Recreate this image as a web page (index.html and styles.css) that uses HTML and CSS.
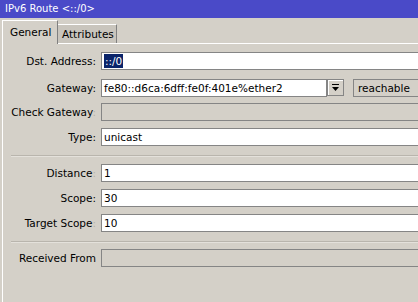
FILE: index.html
```html
<!DOCTYPE html>
<html>
<head>
<meta charset="utf-8">
<link rel="stylesheet" href="styles.css">
</head>
<body>
<div class="window">
  <div class="titlebar">IPv6 Route &lt;::/0&gt;</div>
  <div class="tabs">
    <div class="tab active">General</div>
    <div class="tab">Attributes</div>
  </div>
  <div class="panel">
    <div class="row">
      <div class="label">Dst. Address:</div>
      <div class="field"><span class="sel">::/0</span></div>
    </div>
    <div class="row row-gw">
      <div class="label">Gateway:</div>
      <div class="gw">
        <div class="field gw-input">fe80::d6ca:6dff:fe0f:401e%ether2</div>
        <div class="dd-btn"><svg width="7" height="8" viewBox="0 0 7 8"><rect x="0" y="0" width="7" height="1" fill="#000"/><path d="M0 3 H7 L3.5 7 Z" fill="#000"/></svg></div>
        <div class="field disabled status">reachable</div>
      </div>
    </div>
    <div class="row row-check">
      <div class="label">Check Gateway<span class="faint">:</span></div>
      <div class="field disabled"></div>
    </div>
    <div class="row">
      <div class="label">Type:</div>
      <div class="field">unicast</div>
    </div>
    <div class="sep sep1"></div>
    <div class="row row-first">
      <div class="label">Distance<span class="faint">:</span></div>
      <div class="field">1</div>
    </div>
    <div class="row">
      <div class="label">Scope:</div>
      <div class="field">30</div>
    </div>
    <div class="row">
      <div class="label">Target Scope<span class="faint">:</span></div>
      <div class="field">10</div>
    </div>
    <div class="sep sep2"></div>
    <div class="row row-first">
      <div class="label">Received From</div>
      <div class="field disabled"></div>
    </div>
  </div>
</div>
</body>
</html>
```
FILE: styles.css
```css
html, body {
  margin: 0;
  padding: 0;
  background: #d4d0c8;
  overflow: hidden;
}
body {
  width: 418px;
  height: 302px;
  font-family: "DejaVu Sans", sans-serif;
  font-size: 10px;
  color: #000;
}
.window {
  width: 418px;
  height: 302px;
  overflow: hidden;
}
.titlebar {
  height: 18px;
  line-height: 18px;
  background: #4a4ac8;
  color: #fff;
  padding-left: 5px;
  font-size: 10px;
}
.tabs {
  display: flex;
  align-items: flex-end;
  height: 23px;
  margin-top: 2px;
  padding-left: 2px;
  position: relative;
  z-index: 1;
}
.tab {
  box-sizing: border-box;
  height: 19px;
  width: 59px;
  background: #c9c5bd;
  border-top: 1px solid #fff;
  border-right: 1px solid #808080;
  padding-left: 4px;
  line-height: 18px;
  font-size: 10.5px;
}
.tab.active {
  height: 24px;
  width: 56px;
  margin-bottom: -1px;
  background: #d4d0c8;
  border-left: 1px solid #fff;
  padding-left: 7px;
  line-height: 22px;
}
.panel {
  border-top: 1px solid #fff;
  border-left: 1px solid #fff;
  margin-left: 2px;
  padding-top: 8px;
  height: 260px;
}
.row {
  display: grid;
  grid-template-columns: 93px 1fr;
  column-gap: 5px;
  height: 18px;
  margin-top: 7px;
}
.row:first-child {
  margin-top: 0;
}
.row-gw {
  margin-top: 9px;
}
.row-check {
  margin-top: 6px;
}
.row-first {
  margin-top: 0;
}
.label {
  text-align: right;
  line-height: 18px;
  white-space: nowrap;
  font-size: 10.5px;
}
.faint {
  color: #b4b0a8;
}
.field {
  box-sizing: border-box;
  height: 18px;
  min-width: 0;
  border: 1px solid #858585;
  border-right: none;
  background: #fff;
  padding-left: 2px;
  line-height: 16px;
  font-size: 10.5px;
  white-space: nowrap;
  overflow: hidden;
}
.field.disabled {
  background: #d4d0c8;
}
.sel {
  background: #0a246a;
  color: #fff;
  padding: 0 1px;
  display: inline-block;
  line-height: 14px;
  margin-top: 1px;
}
.gw {
  display: flex;
  align-items: flex-start;
  min-width: 0;
}
.gw-input {
  width: 226px;
  flex: none;
  border-right: 1px solid #858585;
}
.dd-btn {
  box-sizing: border-box;
  width: 17px;
  height: 17px;
  border: 1px solid #858585;
  box-shadow: inset 1px 1px 0 #fff;
  display: flex;
  align-items: center;
  justify-content: center;
  flex: none;
}
.status {
  margin-left: 9px;
  flex: 1;
  padding-left: 4px;
}
.sep {
  margin-left: 8px;
  height: 0;
  border-top: 1px solid #b9b5ad;
  border-bottom: 1px solid #e4e1db;
}
.sep1 {
  margin-top: 9px;
  margin-bottom: 7px;
}
.sep2 {
  margin-top: 9px;
  margin-bottom: 6px;
}
```
